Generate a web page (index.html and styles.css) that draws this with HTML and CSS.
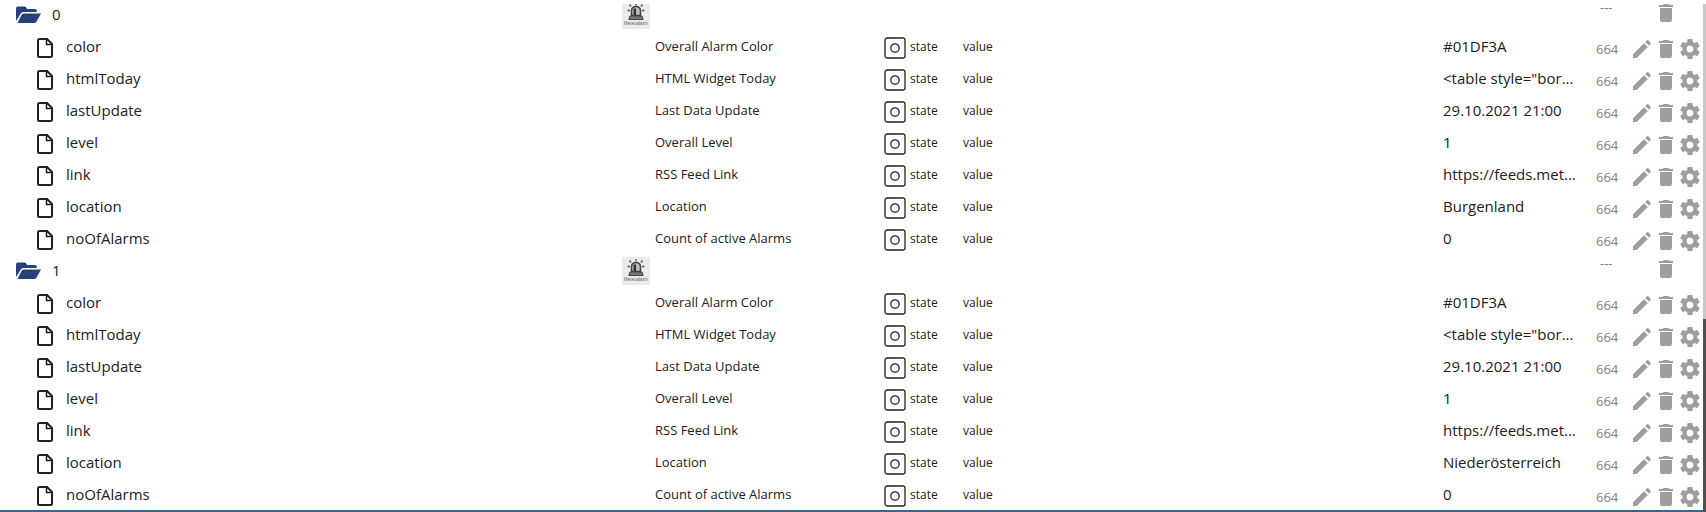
FILE: index.html
```
<!DOCTYPE html>
<html lang="en">
<head>
  <meta charset="UTF-8">
  <title>Objects</title>
  <link rel="stylesheet" href="styles.css">
</head>
<body>

  <!-- icons -->
  <svg class="sprite" aria-hidden="true">
    <symbol id="folder" viewBox="0 0 26 18">
      <path d="M0 15V2.500Q0 .5 2 .5H8.500Q10 .5 10.500 2L11 3H19Q20.800 3 20.800 5V6H7.500Q5.500 6 4.500 8Z"/>
      <path d="M7.500 7.500H25L20.500 15.500Q19.600 17 18 17H1.500L5.500 9Q6.200 7.500 7.500 7.500Z"/>
    </symbol>
    <symbol id="file" viewBox="0 0 16 20">
      <path d="M2.500 1H10L15 6V17.500Q15 19 13.500 19H2.500Q1 19 1 17.500V2.500Q1 1 2.500 1Z" fill="none" stroke="currentColor" stroke-width="2"/>
      <path d="M9.500 1V6.500H15" fill="none" stroke="currentColor" stroke-width="1.500"/>
    </symbol>
    <symbol id="state" viewBox="0 0 22 22">
      <rect x="1" y="1" width="20" height="20" rx="2" fill="none" stroke="currentColor" stroke-width="1.300"/>
      <circle cx="11" cy="11" r="4.200" fill="none" stroke="currentColor" stroke-width="1.300"/>
    </symbol>
    <symbol id="edit" viewBox="0 0 24 24">
      <path d="M3 17.250V21h3.750L17.810 9.940l-3.750-3.750L3 17.250zM20.710 7.040c.39-.39.39-1.020 0-1.410l-2.340-2.340c-.39-.39-1.020-.39-1.410 0l-1.830 1.830 3.750 3.750 1.830-1.830z"/>
    </symbol>
    <symbol id="trash" viewBox="0 0 24 24">
      <path d="M6 19c0 1.100.9 2 2 2h8c1.100 0 2-.9 2-2V7H6v12zM19 4h-3.500l-1-1h-5l-1 1H5v2h14V4z"/>
    </symbol>
    <symbol id="gear" viewBox="0 0 24 24">
      <path d="M19.430 12.980c.04-.32.07-.64.07-.98s-.03-.66-.07-.98l2.110-1.650c.19-.15.24-.42.12-.64l-2-3.460c-.12-.22-.39-.3-.61-.22l-2.490 1c-.52-.4-1.080-.73-1.690-.98l-.38-2.650C14.460 2.180 14.250 2 14 2h-4c-.25 0-.46.18-.49.42l-.38 2.650c-.61.25-1.170.59-1.690.98l-2.490-1c-.23-.09-.49 0-.61.22l-2 3.460c-.13.22-.07.49.12.64l2.110 1.650c-.04.32-.07.65-.07.98s.03.66.07.98l-2.110 1.650c-.19.15-.24.42-.12.64l2 3.460c.12.22.39.3.61.22l2.490-1c.52.4 1.080.73 1.690.98l.38 2.650c.03.24.24.42.49.42h4c.25 0 .46-.18.49-.42l.38-2.650c.61-.25 1.170-.59 1.690-.98l2.490 1c.23.09.49 0 .61-.22l2-3.460c.12-.22.07-.49-.12-.64l-2.110-1.650zM12 15.500c-1.930 0-3.500-1.570-3.500-3.500s1.570-3.500 3.500-3.500 3.500 1.570 3.500 3.500-1.570 3.500-3.500 3.500z"/>
    </symbol>
    <symbol id="alarm" viewBox="0 0 28 28">
      <rect width="28" height="28" fill="#ebebeb"/>
      <path d="M14 2V4.500M7.500 3.500L9 5.500M20.500 3.500L19 5.500M5.500 9.500H8M20 9.500H22.500" stroke="#555" stroke-width="1.300"/>
      <path d="M9.500 14.500V9.500Q10 5.500 14 5.500T18.500 9.500V14.500Z" fill="#bbb" stroke="#444" stroke-width="1.500"/>
      <path d="M12.800 7.500V14.500" stroke="#333" stroke-width="2.500"/>
      <path d="M8 15H20L21.200 18.500H6.800Z" fill="#777" stroke="#444"/>
      <text x="2" y="24" font-family="Liberation Sans" font-size="4.500" fill="#666">Meteoalarm</text>
    </symbol>
  </svg>

  <main class="panel">
    <div class="list">
      <table class="objects">
        <colgroup>
          <col class="col-id"><col class="col-icon"><col class="col-name"><col class="col-type"><col class="col-role"><col class="col-value"><col class="col-perm"><col class="col-actions">
        </colgroup>
        <tbody>
          <tr class="group">
            <td class="id"><svg class="folder"><use href="#folder"/></svg>0</td>
            <td><svg class="alarm"><use href="#alarm"/></svg></td><td></td><td></td><td></td><td></td>
            <td class="perm">---</td>
            <td class="actions"><button aria-label="Delete"><svg><use href="#trash"/></svg></button></td>
          </tr>
          <tr>
            <td class="id"><svg class="file"><use href="#file"/></svg>color</td><td></td>
            <td class="name">Overall Alarm Color</td>
            <td class="type"><svg><use href="#state"/></svg>state</td>
            <td class="role">value</td>
            <td class="value">#01DF3A</td>
            <td class="perm">664</td>
            <td class="actions"><button aria-label="Edit"><svg><use href="#edit"/></svg></button><button aria-label="Delete"><svg><use href="#trash"/></svg></button><button aria-label="Settings"><svg><use href="#gear"/></svg></button></td>
          </tr>
          <tr>
            <td class="id"><svg class="file"><use href="#file"/></svg>htmlToday</td><td></td>
            <td class="name">HTML Widget Today</td>
            <td class="type"><svg><use href="#state"/></svg>state</td>
            <td class="role">value</td>
            <td class="value">&lt;table style="bor...</td>
            <td class="perm">664</td>
            <td class="actions"><button aria-label="Edit"><svg><use href="#edit"/></svg></button><button aria-label="Delete"><svg><use href="#trash"/></svg></button><button aria-label="Settings"><svg><use href="#gear"/></svg></button></td>
          </tr>
          <tr>
            <td class="id"><svg class="file"><use href="#file"/></svg>lastUpdate</td><td></td>
            <td class="name">Last Data Update</td>
            <td class="type"><svg><use href="#state"/></svg>state</td>
            <td class="role">value</td>
            <td class="value">29.10.2021 21:00</td>
            <td class="perm">664</td>
            <td class="actions"><button aria-label="Edit"><svg><use href="#edit"/></svg></button><button aria-label="Delete"><svg><use href="#trash"/></svg></button><button aria-label="Settings"><svg><use href="#gear"/></svg></button></td>
          </tr>
          <tr>
            <td class="id"><svg class="file"><use href="#file"/></svg>level</td><td></td>
            <td class="name">Overall Level</td>
            <td class="type"><svg><use href="#state"/></svg>state</td>
            <td class="role">value</td>
            <td class="value">1</td>
            <td class="perm">664</td>
            <td class="actions"><button aria-label="Edit"><svg><use href="#edit"/></svg></button><button aria-label="Delete"><svg><use href="#trash"/></svg></button><button aria-label="Settings"><svg><use href="#gear"/></svg></button></td>
          </tr>
          <tr>
            <td class="id"><svg class="file"><use href="#file"/></svg>link</td><td></td>
            <td class="name">RSS Feed Link</td>
            <td class="type"><svg><use href="#state"/></svg>state</td>
            <td class="role">value</td>
            <td class="value">https://feeds.met...</td>
            <td class="perm">664</td>
            <td class="actions"><button aria-label="Edit"><svg><use href="#edit"/></svg></button><button aria-label="Delete"><svg><use href="#trash"/></svg></button><button aria-label="Settings"><svg><use href="#gear"/></svg></button></td>
          </tr>
          <tr>
            <td class="id"><svg class="file"><use href="#file"/></svg>location</td><td></td>
            <td class="name">Location</td>
            <td class="type"><svg><use href="#state"/></svg>state</td>
            <td class="role">value</td>
            <td class="value">Burgenland</td>
            <td class="perm">664</td>
            <td class="actions"><button aria-label="Edit"><svg><use href="#edit"/></svg></button><button aria-label="Delete"><svg><use href="#trash"/></svg></button><button aria-label="Settings"><svg><use href="#gear"/></svg></button></td>
          </tr>
          <tr>
            <td class="id"><svg class="file"><use href="#file"/></svg>noOfAlarms</td><td></td>
            <td class="name">Count of active Alarms</td>
            <td class="type"><svg><use href="#state"/></svg>state</td>
            <td class="role">value</td>
            <td class="value">0</td>
            <td class="perm">664</td>
            <td class="actions"><button aria-label="Edit"><svg><use href="#edit"/></svg></button><button aria-label="Delete"><svg><use href="#trash"/></svg></button><button aria-label="Settings"><svg><use href="#gear"/></svg></button></td>
          </tr>
          <tr class="group">
            <td class="id"><svg class="folder"><use href="#folder"/></svg>1</td>
            <td><svg class="alarm"><use href="#alarm"/></svg></td><td></td><td></td><td></td><td></td>
            <td class="perm">---</td>
            <td class="actions"><button aria-label="Delete"><svg><use href="#trash"/></svg></button></td>
          </tr>
          <tr>
            <td class="id"><svg class="file"><use href="#file"/></svg>color</td><td></td>
            <td class="name">Overall Alarm Color</td>
            <td class="type"><svg><use href="#state"/></svg>state</td>
            <td class="role">value</td>
            <td class="value">#01DF3A</td>
            <td class="perm">664</td>
            <td class="actions"><button aria-label="Edit"><svg><use href="#edit"/></svg></button><button aria-label="Delete"><svg><use href="#trash"/></svg></button><button aria-label="Settings"><svg><use href="#gear"/></svg></button></td>
          </tr>
          <tr>
            <td class="id"><svg class="file"><use href="#file"/></svg>htmlToday</td><td></td>
            <td class="name">HTML Widget Today</td>
            <td class="type"><svg><use href="#state"/></svg>state</td>
            <td class="role">value</td>
            <td class="value">&lt;table style="bor...</td>
            <td class="perm">664</td>
            <td class="actions"><button aria-label="Edit"><svg><use href="#edit"/></svg></button><button aria-label="Delete"><svg><use href="#trash"/></svg></button><button aria-label="Settings"><svg><use href="#gear"/></svg></button></td>
          </tr>
          <tr>
            <td class="id"><svg class="file"><use href="#file"/></svg>lastUpdate</td><td></td>
            <td class="name">Last Data Update</td>
            <td class="type"><svg><use href="#state"/></svg>state</td>
            <td class="role">value</td>
            <td class="value">29.10.2021 21:00</td>
            <td class="perm">664</td>
            <td class="actions"><button aria-label="Edit"><svg><use href="#edit"/></svg></button><button aria-label="Delete"><svg><use href="#trash"/></svg></button><button aria-label="Settings"><svg><use href="#gear"/></svg></button></td>
          </tr>
          <tr>
            <td class="id"><svg class="file"><use href="#file"/></svg>level</td><td></td>
            <td class="name">Overall Level</td>
            <td class="type"><svg><use href="#state"/></svg>state</td>
            <td class="role">value</td>
            <td class="value">1</td>
            <td class="perm">664</td>
            <td class="actions"><button aria-label="Edit"><svg><use href="#edit"/></svg></button><button aria-label="Delete"><svg><use href="#trash"/></svg></button><button aria-label="Settings"><svg><use href="#gear"/></svg></button></td>
          </tr>
          <tr>
            <td class="id"><svg class="file"><use href="#file"/></svg>link</td><td></td>
            <td class="name">RSS Feed Link</td>
            <td class="type"><svg><use href="#state"/></svg>state</td>
            <td class="role">value</td>
            <td class="value">https://feeds.met...</td>
            <td class="perm">664</td>
            <td class="actions"><button aria-label="Edit"><svg><use href="#edit"/></svg></button><button aria-label="Delete"><svg><use href="#trash"/></svg></button><button aria-label="Settings"><svg><use href="#gear"/></svg></button></td>
          </tr>
          <tr>
            <td class="id"><svg class="file"><use href="#file"/></svg>location</td><td></td>
            <td class="name">Location</td>
            <td class="type"><svg><use href="#state"/></svg>state</td>
            <td class="role">value</td>
            <td class="value">Niederösterreich</td>
            <td class="perm">664</td>
            <td class="actions"><button aria-label="Edit"><svg><use href="#edit"/></svg></button><button aria-label="Delete"><svg><use href="#trash"/></svg></button><button aria-label="Settings"><svg><use href="#gear"/></svg></button></td>
          </tr>
          <tr>
            <td class="id"><svg class="file"><use href="#file"/></svg>noOfAlarms</td><td></td>
            <td class="name">Count of active Alarms</td>
            <td class="type"><svg><use href="#state"/></svg>state</td>
            <td class="role">value</td>
            <td class="value">0</td>
            <td class="perm">664</td>
            <td class="actions"><button aria-label="Edit"><svg><use href="#edit"/></svg></button><button aria-label="Delete"><svg><use href="#trash"/></svg></button><button aria-label="Settings"><svg><use href="#gear"/></svg></button></td>
          </tr>
        </tbody>
      </table>
    </div>
    <div class="scrollbar"><div class="thumb"></div></div>
  </main>

</body>
</html>
```
FILE: styles.css
```
* {
  box-sizing: border-box;
}

body {
  margin: 0;
  background: #fff;
  color: #212121;
  font-family: "Open Sans", "Noto Sans", sans-serif;
  font-size: 15px;
}

.sprite {
  display: none;
}

.panel {
  display: flex;
  height: 100vh;
  padding-top: 4px;
}

.list {
  flex: 1;
  min-width: 0;
  overflow: hidden;
  border-bottom: 2px solid #2f6b93;
}

/* the list is scrolled, first row is partly under the edge */
.objects {
  width: 100%;
  margin-top: -5px;
  table-layout: fixed;
  border-collapse: collapse;
}

.col-id { width: 622px; }
.col-icon { width: 33px; }
.col-name { width: 229px; }
.col-type { width: 79px; }
.col-value { width: 153px; }
.col-perm { width: 34px; }
.col-actions { width: 73px; }

td {
  height: 32px;
  padding: 0;
  line-height: 20px;
  white-space: nowrap;
  vertical-align: middle;
}

td svg {
  display: inline-block;
  vertical-align: middle;
  fill: currentColor;
}

.id {
  padding-left: 37px;
}

.group .id {
  padding-left: 16px;
  padding-bottom: 2px;
}

.folder {
  width: 26px;
  height: 18px;
  margin-right: 10px;
  color: #26427c;
}

.file {
  width: 16px;
  height: 20px;
  margin-right: 13px;
}

.alarm {
  width: 28px;
  height: 28px;
}

.name {
  padding-bottom: 2px;
  font-size: 13px;
}

.type,
.role {
  font-size: 12px;
}

.type {
  padding-top: 2px;
}

.type svg {
  width: 22px;
  height: 22px;
  margin-right: 4px;
}

.value {
  padding-bottom: 2px;
  overflow: hidden;
  text-overflow: ellipsis;
}

.perm {
  padding-top: 4px;
  color: #808080;
  font-size: 13px;
}

.group .perm {
  padding: 4px 0 0 4px;
  line-height: 8px;
  vertical-align: top;
}

.actions {
  padding-top: 4px;
  line-height: 0;
}

.group .actions {
  padding: 0 0 4px 24px;
}

button {
  width: 24px;
  height: 24px;
  padding: 0;
  border: none;
  background: none;
  color: #9e9e9e;
  cursor: pointer;
}

button svg {
  width: 24px;
  height: 24px;
}

.scrollbar {
  display: flex;
  align-items: flex-end;
  width: 3px;
  background: #c8c8c8;
}

.thumb {
  width: 100%;
  height: 38%;
  background: #505050;
}
```
